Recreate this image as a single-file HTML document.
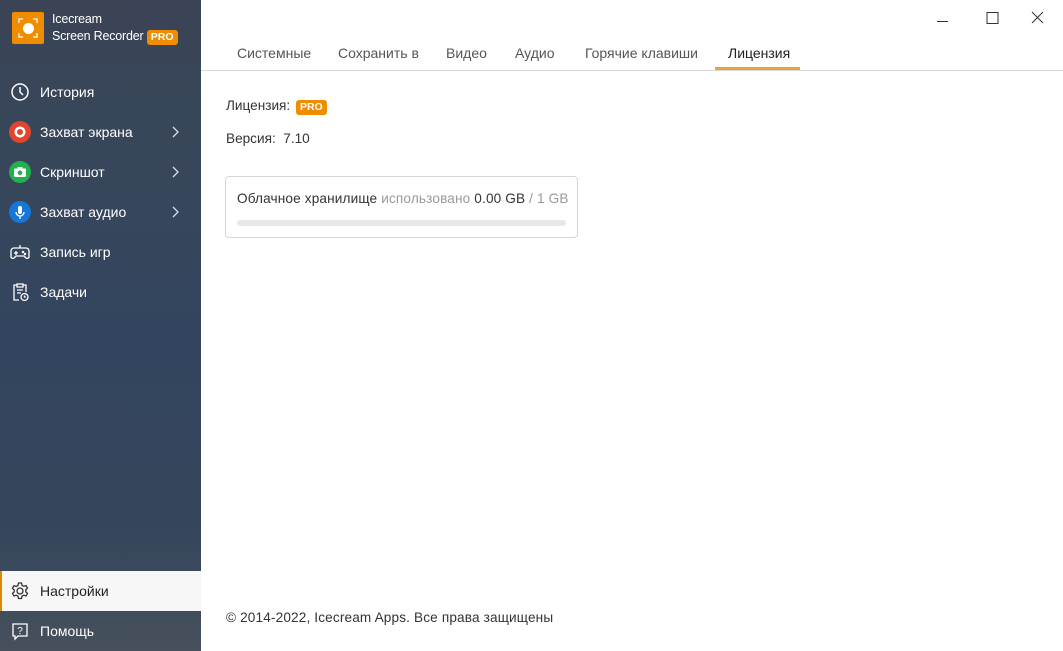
<!DOCTYPE html>
<html><head><meta charset="utf-8"><style>
*{margin:0;padding:0;box-sizing:border-box}
body{width:1063px;height:651px;overflow:hidden;font-family:"Segoe UI","Liberation Sans","DejaVu Sans",sans-serif;background:#fff;position:relative;font-size:14px;color:#333}
#side{position:absolute;left:0;top:0;width:201px;height:651px;background:linear-gradient(180deg,#3a4455 0%,#38465a 20%,#33455e 50%,#34455c 80%,#47505c 100%)}
.logo{position:absolute;left:12px;top:12px;width:32px;height:32px;background:#f08c00;border-radius:2px}
.logo i{position:absolute;left:11px;top:11px;width:11px;height:11px;border-radius:50%;background:#fff}
.app{position:absolute;left:52px;top:11px;color:#fff;font-size:12.5px;line-height:17px;letter-spacing:-0.2px}
.pro{display:inline-block;background:#f08c00;color:#fff;font-weight:bold;font-size:10.5px;line-height:15px;padding:0 4px;border-radius:3px;letter-spacing:0}
.item{position:absolute;left:0;width:201px;height:40px;color:#fff;font-size:14px;line-height:40px;padding-left:40px}
.ic{position:absolute;left:9px;top:9px;width:22px;height:22px}
.chev{position:absolute;left:171px;top:14px;width:10px;height:12px}
.sel{background:#f7f7f7;color:#222;border-left:2px solid #e08a00;padding-left:38px}
.tabs{position:absolute;left:201px;top:42px;right:0;height:29px;border-bottom:1px solid #d8d8d8}
.tab{position:absolute;top:3px;font-size:14px;color:#555}
.act{color:#222}
.ul{position:absolute;left:715px;top:67px;width:85px;height:3px;background:#e8a23a}
.box{position:absolute;left:225px;top:176px;width:353px;height:62px;border:1px solid #d6d6d6;border-radius:4px}
.bar{position:absolute;left:11px;top:43px;width:329px;height:6px;border-radius:3px;background:#e8e8e8}
.t{font-size:13.6px}
</style></head><body>
<div id="side">
<div class="logo"><i></i>
<svg width="32" height="32" style="position:absolute;left:0;top:0" fill="none" stroke="#fff" stroke-width="1.3"><path d="M7 11V7h4M21 7h4v4M25 21v4h-4M11 25H7v-4"/></svg></div>
<div class="app">Icecream<br>Screen Recorder <span class="pro">PRO</span></div>
<div class="item" style="top:72px"><svg class="ic" viewBox="0 0 22 22" fill="none" stroke="#fff" stroke-width="1.5"><circle cx="11" cy="11" r="8"/><path d="M11 6v5l3 3"/></svg>История</div>
<div class="item" style="top:112px"><svg class="ic" viewBox="0 0 22 22"><circle cx="11" cy="11" r="11" fill="#e0452e"/><circle cx="11" cy="11" r="5.5" fill="#fff"/><circle cx="11" cy="11" r="3" fill="#e0452e"/></svg>Захват экрана<svg class="chev" fill="none" stroke="#ddd" stroke-width="1.3"><path d="M2 1l5 5-5 5"/></svg></div>
<div class="item" style="top:152px"><svg class="ic" viewBox="0 0 22 22"><circle cx="11" cy="11" r="11" fill="#22b24c"/><rect x="5" y="7.5" width="12" height="8.5" rx="1" fill="#fff"/><rect x="8.5" y="6" width="5" height="2" fill="#fff"/><circle cx="11" cy="11.8" r="2.3" fill="#22b24c"/></svg>Скриншот<svg class="chev" fill="none" stroke="#ddd" stroke-width="1.3"><path d="M2 1l5 5-5 5"/></svg></div>
<div class="item" style="top:192px"><svg class="ic" viewBox="0 0 22 22"><circle cx="11" cy="11" r="11" fill="#1677d8"/><rect x="9" y="5" width="4" height="8" rx="2" fill="#fff"/><path d="M7 11a4 4 0 0 0 8 0M11 15v3" stroke="#fff" stroke-width="1.3" fill="none"/></svg>Захват аудио<svg class="chev" fill="none" stroke="#ddd" stroke-width="1.3"><path d="M2 1l5 5-5 5"/></svg></div>
<div class="item" style="top:232px"><svg class="ic" viewBox="0 0 22 22" fill="none" stroke="#fff" stroke-width="1.3"><path d="M5 7h12a3 3 0 0 1 3 3v6a2 2 0 0 1-3 1l-2-2H7l-2 2a2 2 0 0 1-3-1v-6a3 3 0 0 1 3-3zM7 10v4M5 12h4M11 7V4"/><circle cx="14" cy="11" r=".6"/><circle cx="16" cy="13" r=".6"/></svg>Запись игр</div>
<div class="item" style="top:272px"><svg class="ic" viewBox="0 0 22 22" fill="none" stroke="#fff" stroke-width="1.3"><path d="M10 19H5V4h3M14 4h3v7M8 3h6v3H8zM8 9h6M8 12h4"/><circle cx="15.5" cy="16" r="3.5"/><path d="M15.5 14.5V16h1.2"/></svg>Задачи</div>
<div class="item sel" style="top:571px"><svg class="ic" viewBox="0 0 22 22" fill="none" stroke="#333" stroke-width="1.3" style="left:7px"><circle cx="11" cy="11" r="3"/><path d="M9.5 3h3l.5 2.3 1.8 1 2.2-.8 1.5 2.6-1.7 1.6v2.1l1.7 1.6-1.5 2.6-2.2-.8-1.8 1-.5 2.300h-3l-.5-2.3-1.8-1-2.2.8-1.5-2.6 1.7-1.6V9.9L3.5 8.3 5 5.7l2.2.8 1.8-1z"/></svg>Настройки</div>
<div class="item" style="top:611px"><svg class="ic" viewBox="0 0 22 22" fill="none" stroke="#fff" stroke-width="1.3"><path d="M4 4h14v12H9l-3 3v-3H4z"/><text x="11" y="14" font-size="10" fill="#fff" stroke="none" text-anchor="middle" font-family="Liberation Sans">?</text></svg>Помощь</div>
</div>
<svg style="position:absolute;left:936px;top:9px" width="110" height="16" fill="none" stroke="#333" stroke-width="1"><path d="M1 12.5h11M51 3.5h11v11H51zM96 3l11 11M107 3L96 14"/></svg>
<div class="tabs">
<span class="tab" style="left:36px">Системные</span>
<span class="tab" style="left:137px">Сохранить в</span>
<span class="tab" style="left:245px">Видео</span>
<span class="tab" style="left:314px">Аудио</span>
<span class="tab" style="left:384px">Горячие клавиши</span>
<span class="tab act" style="left:527px">Лицензия</span>
</div>
<div class="ul"></div>
<div class="t" style="position:absolute;left:226px;top:98px">Лицензия: <span class="pro" style="margin-left:2px">PRO</span></div>
<div class="t" style="position:absolute;left:226px;top:131px">Версия:&nbsp; 7.10</div>
<div class="box"><div class="t" style="position:absolute;left:11px;top:14px;white-space:nowrap;letter-spacing:0.15px">Облачное хранилище <span style="color:#999">использовано</span> 0.00 GB <span style="color:#999">/ 1 GB</span></div><div class="bar"></div></div>
<div class="t" style="position:absolute;left:226px;top:610px;letter-spacing:0.15px">© 2014-2022, Icecream Apps. Все права защищены</div>
</body></html>
